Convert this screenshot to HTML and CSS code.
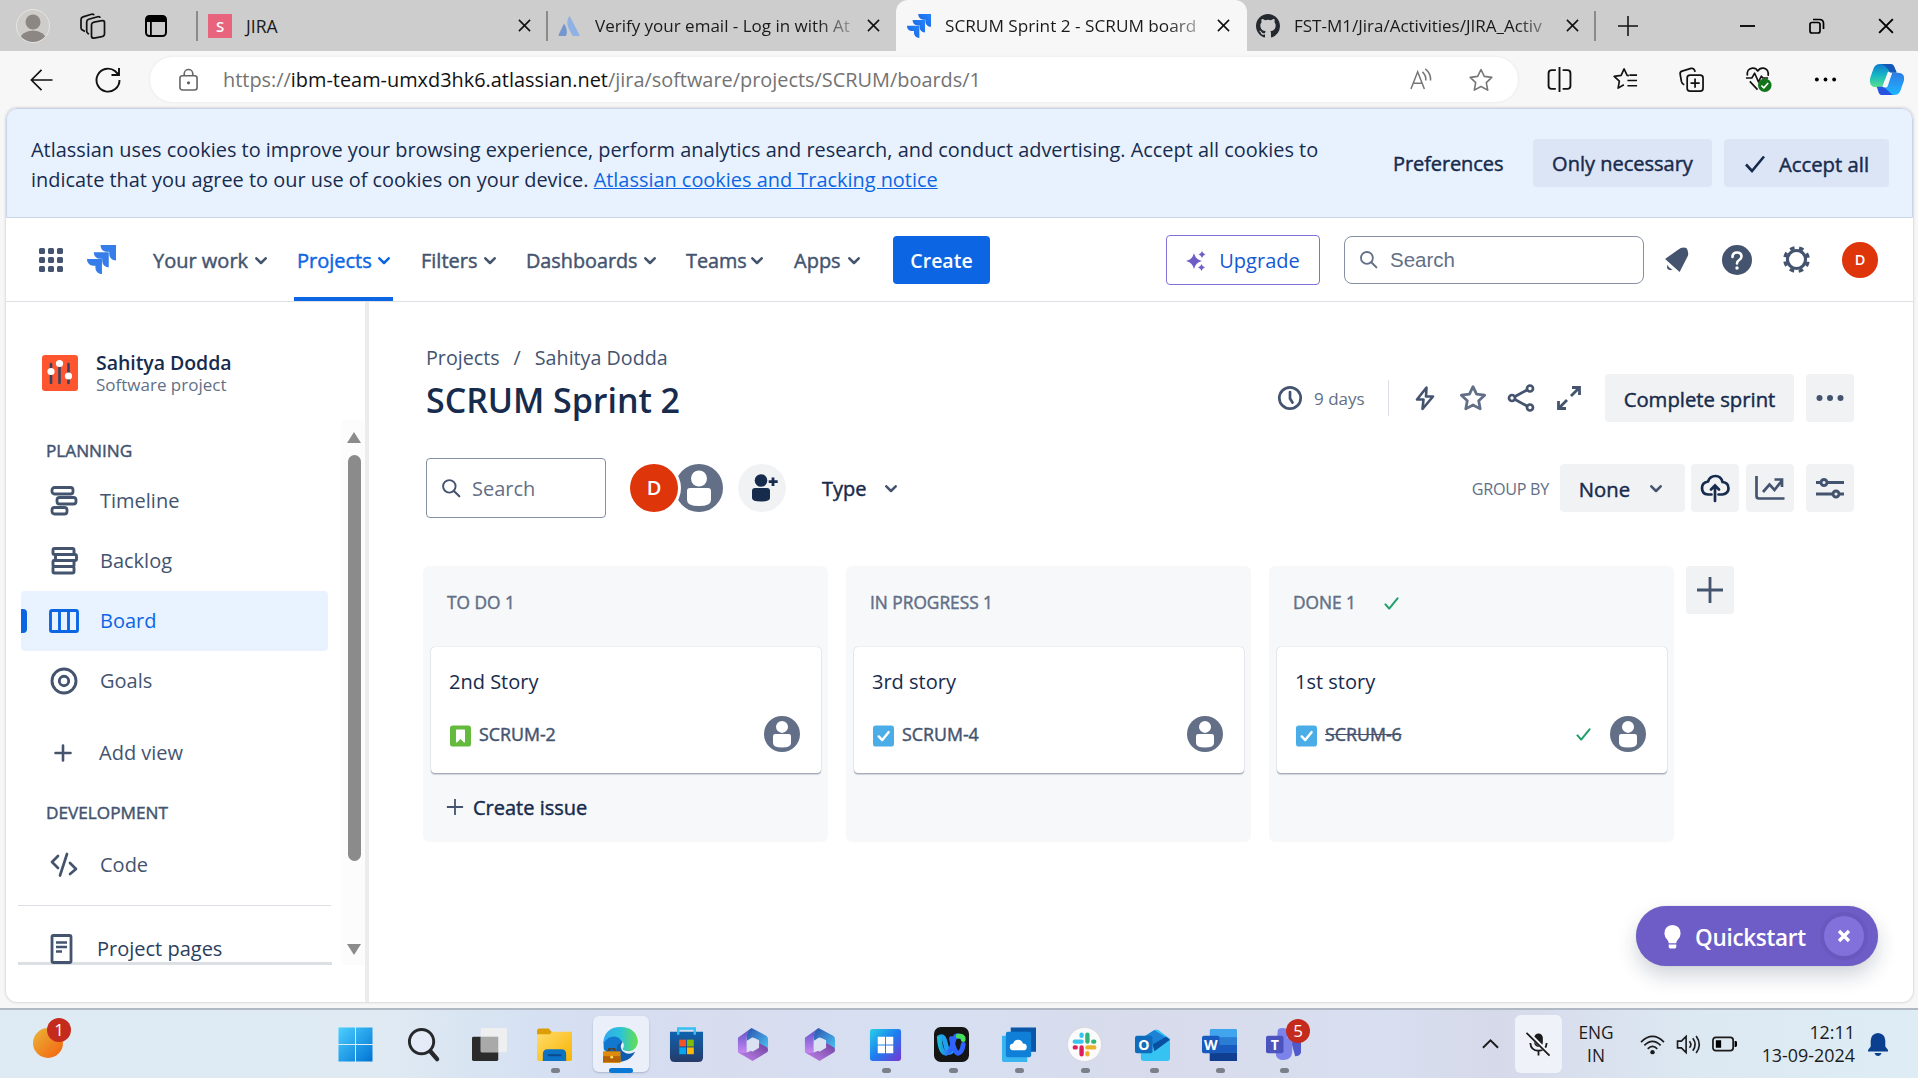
FILE: index.html
```html
<!DOCTYPE html>
<html lang="en">
<head>
<meta charset="utf-8">
<title>SCRUM Sprint 2 - SCRUM board</title>
<link rel="stylesheet" href="styles.css">
</head>
<body>
<svg class="sprite" width="0" height="0">
  <defs>
    <linearGradient id="gJira" x1="1" y1="0" x2="0" y2="1"><stop offset="0" stop-color="#2684ff"/><stop offset="1" stop-color="#1663d8"/></linearGradient>
    <linearGradient id="gWin" x1="0" y1="0" x2="1" y2="1"><stop offset="0" stop-color="#4cd0ff"/><stop offset="1" stop-color="#0073d4"/></linearGradient>
    <linearGradient id="gFold" x1="0" y1="0" x2="1" y2="1"><stop offset="0" stop-color="#ffdc6b"/><stop offset="1" stop-color="#f8b300"/></linearGradient>
    <linearGradient id="gEdge" x1="0" y1="0" x2="1" y2="0"><stop offset="0" stop-color="#35a6f0"/><stop offset=".5" stop-color="#2cc3d8"/><stop offset="1" stop-color="#66e04c"/></linearGradient>
    <linearGradient id="gStore" x1="0" y1="0" x2="0" y2="1"><stop offset="0" stop-color="#0f62b0"/><stop offset="1" stop-color="#253b68"/></linearGradient>
    <linearGradient id="gHexA" x1="0" y1="0" x2="0" y2="1"><stop offset="0" stop-color="#5b50c8"/><stop offset="1" stop-color="#d08cf4"/></linearGradient>
    <linearGradient id="gHexB" x1="0" y1="0" x2="1" y2="1"><stop offset="0" stop-color="#2c4fae"/><stop offset="1" stop-color="#4cc4f4"/></linearGradient>
    <linearGradient id="gHexC" x1="0" y1="1" x2="1" y2="0"><stop offset="0" stop-color="#c487ee"/><stop offset="1" stop-color="#6c3f9c"/></linearGradient>
    <linearGradient id="gTile" x1="0" y1="0" x2="1" y2="1"><stop offset="0" stop-color="#28d0e6"/><stop offset=".5" stop-color="#1d7cf0"/><stop offset="1" stop-color="#7a35d0"/></linearGradient>
    <linearGradient id="gWebex" x1="0" y1="0" x2="1" y2="0"><stop offset="0" stop-color="#19b9d8"/><stop offset=".5" stop-color="#2f63ff"/><stop offset="1" stop-color="#2f63ff"/></linearGradient>
    <linearGradient id="gCopA" x1="0" y1="0" x2="0" y2="1"><stop offset="0" stop-color="#0f7bd0"/><stop offset=".5" stop-color="#16b8c4"/><stop offset="1" stop-color="#5be08c"/></linearGradient>
    <linearGradient id="gCopB" x1="0" y1="0" x2="0" y2="1"><stop offset="0" stop-color="#2c7be6"/><stop offset="1" stop-color="#1fb6ff"/></linearGradient>
    <symbol id="close" viewBox="0 0 14 14"><path d="M1 1l12 12M13 1L1 13" stroke="currentColor" stroke-width="1.7" fill="none"/></symbol>
    <symbol id="chev" viewBox="0 0 12 8"><path d="M1.3 1.3L6 6l4.700-4.700" stroke="currentColor" stroke-width="2.500" fill="none" stroke-linecap="round" stroke-linejoin="round"/></symbol>
    <symbol id="jira" viewBox="0 0 32 32"><path d="M15 0h17v17c-4 0-7.500-3-7.500-7.500V7.500H22c-4 0-7-3-7-7.500z"/><path d="M7.500 8h16.500v16.500c-4 0-7.200-3-7.200-7.200v-2H14.500c-4 0-7-3-7-7.300z"/><path d="M0 15.500h16.500V32c-4 0-7.200-3-7.200-7.200v-2H7c-4 0-7-3-7-7.300z"/></symbol>
    <symbol id="search" viewBox="0 0 24 24"><circle cx="10" cy="10" r="7.500" fill="none" stroke="currentColor" stroke-width="2.300"/><path d="M15.500 15.500L22 22" stroke="currentColor" stroke-width="2.500" stroke-linecap="round"/></symbol>
    <symbol id="user" viewBox="0 0 48 48"><circle cx="24" cy="24" r="24" fill="#626f86"/><ellipse cx="24" cy="14.500" rx="8" ry="8"/><path d="M12 27q0-3 3-3h18q3 0 3 3v9q0 6-12 6t-12-6z"/></symbol>
    <symbol id="tick" viewBox="0 0 16 14"><path d="M1.500 8l4 4.500L14.500 1.500" fill="none" stroke="currentColor" stroke-width="2.200" stroke-linecap="round" stroke-linejoin="round"/></symbol>
    <symbol id="task" viewBox="0 0 22 22"><rect width="22" height="22" rx="3" fill="#4bade8"/><path d="M6 11.500l3.700 3.700L16.300 7" fill="none" stroke="#fff" stroke-width="2.600" stroke-linecap="round" stroke-linejoin="round"/></symbol>
    <symbol id="star" viewBox="0 0 26 26"><path d="M13 2.500l3.300 6.900 7.500 1-5.500 5.200 1.400 7.500L13 19.500l-6.700 3.600 1.400-7.500L2.200 10.400l7.500-1z" fill="none" stroke="currentColor" stroke-linejoin="round"/></symbol>
    <symbol id="hex" viewBox="0 0 36 36"><path d="M3 11L17 1c-5 4-5 8-5 14v11L8 29 3 26z" fill="url(#gHexA)"/><path d="M17 1l15 8q2 1 2 4v10L24 16q-1-5-6-4t-5 7L12 11Q12 4 17 1z" fill="url(#gHexB)"/><path d="M3 26q8 2 15-2 6-1 6-8l9 5q2 3 0 5L18 35z" fill="url(#gHexC)"/><path d="M18 11.500l6 2.500v7l-6 3.500-5-3v-7z" fill="#dae2f2" stroke="#dae2f2" stroke-width="1.500" stroke-linejoin="round"/></symbol>
  </defs>
</svg>

<header class="tabs">
  <svg class="t-avatar" viewBox="0 0 34 34"><defs><clipPath id="av"><circle cx="17" cy="17" r="16"/></clipPath></defs><circle cx="17" cy="17" r="16.500" fill="#cfcdca" stroke="#e6e5e3"/><g clip-path="url(#av)" fill="#8c8783"><circle cx="17" cy="13" r="7.500"/><ellipse cx="17" cy="31" rx="13" ry="9.500"/></g></svg>
  <svg class="t-work" viewBox="0 0 26 26" fill="none" stroke="#111" stroke-width="1.700" stroke-linejoin="round"><rect x="11.500" y="7.500" width="13" height="16" rx="2.500" transform="skewY(-10) translate(0 4)"/><path d="M9 21l-1-.6q-1.300-.8-1.300-2.400V9q0-2 2-2.700l9-2.600q2-.5 2.600 1M5 18.600l-3-1.800Q1 16 1 14.500V6.600q0-2 2-2.700l8.500-2.600q2-.5 2.600 1"/></svg>
  <svg class="t-vert" viewBox="0 0 22 22"><rect x="1" y="1" width="20" height="20" rx="3.500" fill="none" stroke="#000" stroke-width="2"/><path d="M1 7V4q0-3 3-3h14q3 0 3 3v3zM5 6h1.800v15H5z"/></svg>
  <i class="sep s1"></i>
  <div class="tab t1"><span class="fav-s">S</span><span class="label">JIRA</span><svg class="x"><use href="#close"/></svg></div>
  <i class="sep"></i>
  <div class="tab t2"><svg class="fav" viewBox="0 0 24 24" fill="#8fb1e4"><path d="M7 9.500L1.500 21q-.3 1 .8 1H9q2.500-6-2-12.500z" fill="#7597cf"/><path d="M12 2.500Q8.500 9 12 15l3.200 6.300q.3.700 1 .7H22q1 0 .5-1L13 2.500q-.5-.6-1 0z"/></svg><span class="label fade">Verify your email - Log in with At</span><svg class="x"><use href="#close"/></svg></div>
  <div class="tab t3"><svg class="fav" fill="url(#gJira)"><use href="#jira"/></svg><span class="label fade">SCRUM Sprint 2 - SCRUM board</span><svg class="x"><use href="#close"/></svg></div>
  <div class="tab t4"><svg class="fav" viewBox="0 0 16 16" fill="#24292f"><path d="M8 0C3.580 0 0 3.580 0 8c0 3.540 2.290 6.530 5.470 7.590.4.070.55-.17.55-.38 0-.19-.01-.82-.01-1.490-2.010.37-2.530-.49-2.690-.94-.09-.23-.48-.94-.82-1.130-.28-.15-.68-.52-.01-.53.63-.01 1.080.58 1.230.82.72 1.210 1.870.87 2.330.66.07-.52.28-.87.51-1.070-1.780-.2-3.640-.89-3.640-3.950 0-.87.31-1.590.82-2.150-.08-.2-.36-1.020.08-2.120 0 0 .67-.21 2.200.82a7.600 7.600 0 0 1 4 0c1.530-1.040 2.200-.82 2.200-.82.44 1.100.16 1.920.08 2.120.51.56.82 1.270.82 2.150 0 3.070-1.870 3.750-3.650 3.950.29.25.54.73.54 1.480 0 1.070-.01 1.930-.01 2.200 0 .21.15.46.55.38A8.010 8.010 0 0 0 16 8c0-4.420-3.580-8-8-8z"/></svg><span class="label fade">FST-M1/Jira/Activities/JIRA_Activ</span><svg class="x"><use href="#close"/></svg></div>
  <i class="sep"></i>
  <svg class="t-plus" viewBox="0 0 22 22"><path d="M11 0v22M0 11h22" stroke="#111" stroke-width="1.700"/></svg>
  <svg class="t-win" viewBox="0 0 16 16"><path d="M0 8h15" stroke="#000" stroke-width="1.800"/></svg>
  <svg class="t-win" viewBox="0 0 16 16" fill="none" stroke="#000" stroke-width="1.700"><rect x="1" y="4.500" width="10" height="10.500" rx="2"/><path d="M4 1.500h6.500q4 0 4 4V11"/></svg>
  <svg class="t-win"><use href="#close"/></svg>
</header>

<div class="toolbar">
  <svg class="b-back" viewBox="0 0 26 24" fill="none" stroke="#111" stroke-width="1.800"><path d="M25 12H2M13 1L2 12l11 11"/></svg>
  <svg class="b-ref" viewBox="0 0 26 26" fill="none" stroke="#111" stroke-width="1.900"><path d="M24.500 13A11.500 11.500 0 1 1 20 4l3.500 3.500M24 1v7h-7.500"/></svg>
  <div class="address">
    <svg class="a-lock" viewBox="0 0 20 24" fill="none" stroke="#666" stroke-width="1.700"><rect x="1" y="7.500" width="18" height="15" rx="2.500"/><path d="M5.500 7.500V5.500a4.500 4.500 0 0 1 9 0v2"/><circle cx="10" cy="15" r=".9" fill="#666"/></svg>
    <span class="url">https://<b>ibm-team-umxd3hk6.atlassian.net</b>/jira/software/projects/SCRUM/boards/1</span>
    <svg class="a-read" viewBox="0 0 24 24" fill="none" stroke="#777" stroke-width="1.600"><path d="M1 22L8 4l7 18M3.500 16h9M13 4q4 4 3.500 9M16 1q6 5 5.500 12"/></svg>
    <svg class="a-star" stroke-width="1.600"><use href="#star"/></svg>
  </div>
  <div class="tools">
    <svg viewBox="0 0 24 24" fill="none" stroke="#111" stroke-width="1.800"><path d="M8.500 3H4.500Q1.500 3 1.500 6v12q0 3 3 3h4M15 3h4.500q3 0 3 3v12q0 3-3 3H15M12 0v24"/></svg>
    <svg viewBox="0 0 26 26" fill="none" stroke="#111" stroke-width="1.700" stroke-linejoin="round"><path d="M16.500 9l-1.800-.3L11.500 2 8.500 8.700l-7.300 1 5.400 5L5.300 22l6-3.500M17 8.500h8M15 14h10M15 19.500h10"/></svg>
    <svg viewBox="0 0 26 26" fill="none" stroke="#111" stroke-width="1.800"><path d="M5.500 18.500Q3 17.500 2.500 15L1.200 7.500q-.4-2.500 2-3.200L12.500 1.500q2.500-.6 3.500 1.500l.8 2"/><rect x="8.500" y="8.500" width="16.500" height="16.500" rx="3"/><path d="M16.700 12v9.500M12 16.700h9.500"/></svg>
    <svg class="heart" viewBox="0 0 28 28" fill="none" stroke="#111" stroke-width="1.700" stroke-linejoin="round"><path d="M2.500 10Q1.500 3 7.500 2.200q4-.4 5.700 3 2-3.400 6-3 5.700 1 4.800 8M13 24.500L5 16M1 12.500h6l3-5 4 9 3-6 1.500 2H24"/><circle cx="20.500" cy="20" r="7" fill="#13741a" stroke="none"/><path d="M17 20.200l2.500 2.500 4.500-5" stroke="#fff"/></svg>
    <svg viewBox="0 0 26 26"><circle cx="4" cy="13" r="2"/><circle cx="13" cy="13" r="2"/><circle cx="22" cy="13" r="2"/></svg>
    <svg class="copilot" viewBox="0 0 36 34"><path d="M22 1l6 8h-9l-6 16H7q-8 0-6.500-9L4 6q1.500-5 7-5z" fill="url(#gCopA)"/><path d="M14 33l-6-8h9l6-15h6q8 0 6.500 8L32 28q-1.500 5-7 5z" fill="url(#gCopB)"/><path d="M12 1h10q3 0 4 4l2 5h-7q-3-7-9-9z" fill="#1559b8"/><path d="M24 33H13q-3 0-4-4l-1.500-4.500h7z" fill="#2453e0"/><path d="M19.500 10.500h3.200l-4.700 14h-4z" fill="#f7f7f7" stroke="#f7f7f7" stroke-linejoin="round"/></svg>
  </div>
</div>

<div class="viewport">
  <section class="cookies">
    <p>Atlassian uses cookies to improve your browsing experience, perform analytics and research, and conduct advertising. Accept all cookies to<br>indicate that you agree to our use of cookies on your device. <a>Atlassian cookies and Tracking notice</a></p>
    <span class="pref">Preferences</span>
    <button class="only">Only necessary</button>
    <button class="accept"><svg viewBox="0 0 22 18"><path d="M2 9.500l6 6.500L20 1.500" fill="none" stroke="#172b4d" stroke-width="2.600"/></svg>Accept all</button>
  </section>

  <nav class="nav">
    <svg class="n-grid" viewBox="0 0 24 24" fill="#44546f"><rect width="6" height="6" rx="1.500"/><rect x="9" width="6" height="6" rx="1.500"/><rect x="18" width="6" height="6" rx="1.500"/><rect y="9" width="6" height="6" rx="1.500"/><rect x="9" y="9" width="6" height="6" rx="1.500"/><rect x="18" y="9" width="6" height="6" rx="1.500"/><rect y="18" width="6" height="6" rx="1.500"/><rect x="9" y="18" width="6" height="6" rx="1.500"/><rect x="18" y="18" width="6" height="6" rx="1.500"/></svg>
    <svg class="n-jira" fill="#357de8"><use href="#jira"/></svg>
    <a class="m-work">Your work<svg><use href="#chev"/></svg></a>
    <a class="m-proj on">Projects<svg><use href="#chev"/></svg></a>
    <a class="m-filt">Filters<svg><use href="#chev"/></svg></a>
    <a class="m-dash">Dashboards<svg><use href="#chev"/></svg></a>
    <a class="m-team">Teams<svg><use href="#chev"/></svg></a>
    <a class="m-apps">Apps<svg><use href="#chev"/></svg></a>
    <button class="create">Create</button>
    <button class="upgrade"><svg viewBox="0 0 20 20" fill="#6e5dc6"><path d="M8 2q1.500 6.500 8 8-6.500 1.500-8 8-1.500-6.500-8-8 6.500-1.500 8-8z"/><path d="M16 0q.7 2.800 3.500 3.500Q16.700 4.200 16 7q-.7-2.800-3.500-3.500Q15.300 2.800 16 0zM15.500 13q.7 2.800 3.500 3.500-2.800.7-3.500 3.500-.7-2.800-3.500-3.500 2.800-.7 3.500-3.500z"/></svg>Upgrade</button>
    <div class="n-search"><svg><use href="#search"/></svg>Search</div>
    <div class="n-icons">
      <svg viewBox="0 0 26 26" fill="#44546f"><path d="M2 12.500L14.500 3.500q4-3 8-1.500 2.500 3 1.500 7.500L16 25z"/><path d="M4.500 18q1 3.500 5 4.500-3 1.500-4.700 0t-.3-4.500z"/></svg>
      <svg class="help" viewBox="0 0 30 30"><circle cx="15" cy="15" r="15" fill="#44546f"/><path d="M10.500 12q0-4.500 4.500-4.500t4.500 4q0 2-2.300 3.500T15 18.500" fill="none" stroke="#fff" stroke-width="2.600" stroke-linecap="round"/><circle cx="15" cy="23" r="1.700" fill="#fff"/></svg>
      <svg viewBox="0 0 26 26" fill="none" stroke="#44546f"><circle cx="13" cy="13" r="8.700" stroke-width="3"/><circle cx="13" cy="13" r="11.300" stroke-width="3.200" stroke-dasharray="4.400 4.475" stroke-dashoffset="-2.200"/></svg>
      <span class="me">D</span>
    </div>
  </nav>

  <div class="body">
    <aside class="side">
      <div class="project">
        <svg viewBox="0 0 36 36"><rect width="36" height="36" rx="3" fill="#ff5630"/><path d="M9 9v19M17.500 8v20M26.500 9v19" stroke="#344563" stroke-width="2.600" stroke-linecap="round"/><g fill="#fff"><circle cx="9" cy="16.500" r="3.600"/><circle cx="17.500" cy="8.500" r="3.600"/><circle cx="26.500" cy="21" r="3.600"/></g></svg>
        <div><strong>Sahitya Dodda</strong><small>Software project</small></div>
      </div>
      <div class="scroller">
        <div class="menu">
          <h3>PLANNING</h3>
          <a><svg viewBox="0 0 30 30" fill="none" stroke="#44546f" stroke-width="2.800"><rect x="3" y="1.500" width="21" height="6.500" rx="2.500"/><rect x="8" y="11.500" width="19" height="6.500" rx="2.500"/><rect x="3" y="21.500" width="15" height="6.500" rx="2.500"/></svg>Timeline</a>
          <a><svg viewBox="0 0 30 30" fill="none" stroke="#44546f" stroke-width="2.900"><rect x="4" y="2.500" width="21" height="6" rx="1.500"/><rect x="6.500" y="8.500" width="21" height="6" rx="1.500"/><rect x="4" y="14.500" width="21" height="6" rx="1"/><rect x="4" y="20.500" width="21" height="6.500" rx="1.500"/></svg>Backlog</a>
          <a class="on"><svg viewBox="0 0 30 30" fill="none" stroke="#0c66e4" stroke-width="2.900"><rect x="1.500" y="4.500" width="27" height="21" rx="1.500"/><path d="M10.500 4.500v21M19.500 4.500v21"/></svg>Board</a>
          <a><svg viewBox="0 0 30 30" fill="none" stroke="#44546f" stroke-width="2.900"><circle cx="15" cy="15" r="12"/><circle cx="15" cy="15" r="4.700"/></svg>Goals</a>
          <a class="add"><svg viewBox="0 0 30 30"><path d="M14 7.500v15M6.500 15h15" stroke="#44546f" stroke-width="2.600" stroke-linecap="round"/></svg>Add view</a>
          <h3 class="dev">DEVELOPMENT</h3>
          <a class="code"><svg viewBox="0 0 30 30" fill="none" stroke="#44546f" stroke-width="2.700" stroke-linecap="round" stroke-linejoin="round"><path d="M9 6l-6 6 6 6M18 4l-7 21.500M21 13l6 6-6 5"/></svg>Code</a>
          <hr>
          <a class="pages"><svg viewBox="0 0 24 30" fill="none" stroke="#44546f"><rect x="3" y="1.500" width="19" height="27" rx="1.500" stroke-width="2.800"/><path d="M7 8.500h11M7 13h11M7 17.500h6" stroke-width="2.500"/></svg>Project pages</a>
        </div>
        <div class="bar"><i class="up"></i><i class="thumb"></i><i class="down"></i></div>
      </div>
    </aside>

    <main class="main">
      <div class="crumbs"><span>Projects</span><span>/</span><span>Sahitya Dodda</span></div>
      <div class="head">
        <h1>SCRUM Sprint 2</h1>
        <div class="actions">
          <svg class="i26" viewBox="0 0 26 26" fill="none" stroke="#44546f" stroke-width="2.700" stroke-linecap="round"><circle cx="13" cy="13" r="10.700"/><path d="M13 7v6.500l2.500 4"/></svg>
          <span class="days">9 days</span>
          <i class="vr"></i>
          <svg class="i26" viewBox="0 0 26 26" fill="none" stroke="#44546f" stroke-width="2.600" stroke-linejoin="round"><path d="M14.500 2.500L5 14.500h6.500L10.500 24 21 11.500h-7z"/></svg>
          <svg class="i28 a-fav" stroke-width="2.600"><use href="#star"/></svg>
          <svg class="i28" viewBox="0 0 28 28" fill="none" stroke="#44546f" stroke-width="2.700"><circle cx="5" cy="14" r="3"/><circle cx="23" cy="4.500" r="3"/><circle cx="23" cy="23.500" r="3"/><path d="M8 12.500l12-6.500M8 15.500l12 6.500"/></svg>
          <svg class="i26" viewBox="0 0 26 26" fill="none" stroke="#44546f" stroke-width="2.800"><path d="M16 2.500h7.500V10M23 3l-8 8M2.500 16v7.500H10M3 23l8-8"/></svg>
          <button class="done-btn">Complete sprint</button>
          <button class="sq"><svg viewBox="0 0 28 28" fill="#44546f"><circle cx="3.500" cy="14" r="3"/><circle cx="14" cy="14" r="3"/><circle cx="24.500" cy="14" r="3"/></svg></button>
        </div>
      </div>
      <div class="filters">
        <div class="f-search"><svg><use href="#search"/></svg><span>Search</span></div>
        <span class="av-d">D</span>
        <svg class="av-u" fill="#fff"><use href="#user"/></svg>
        <span class="av-add"><svg viewBox="0 0 28 28" fill="#172b4d"><circle cx="11" cy="6.500" r="6.300"/><path d="M2 17q0-3 3-3h12q3 0 3 3v7q0 3.500-9 3.500T2 24z"/><path d="M23 3.500v8.500M18.700 7.700h9" stroke="#172b4d" stroke-width="2.800"/></svg></span>
        <span class="type">Type<svg><use href="#chev"/></svg></span>
        <span class="group">GROUP BY</span>
        <button class="none">None<svg><use href="#chev"/></svg></button>
        <button class="sq q1"><svg class="big" viewBox="0 0 30 30" fill="none" stroke="#172b4d" stroke-width="2.700" stroke-linecap="round"><path d="M11.500 21.500H8q-6-.5-6-6.500 0-5.500 6-6.500Q10 3 15.500 3t7 6q6 .5 6 6.500 0 5-6 6h-4M15 28V13M11 16.500l4-4 4 4"/></svg></button>
        <button class="sq q2"><svg class="big" viewBox="0 0 30 30" fill="none" stroke="#44546f" stroke-width="2.700"><path d="M1.500 3v20q0 2.500 2.500 2.500h25.500M8 19l6.500-7.500 5 5.500L27 7.500M19.500 6.500H27V14"/></svg></button>
        <button class="sq q3"><svg viewBox="0 0 28 28" fill="none" stroke="#44546f" stroke-width="2.900"><path d="M0 8.500h5M11 8.500h17M0 20h17M23 20h5"/><circle cx="8" cy="8.500" r="3"/><circle cx="20" cy="20" r="3"/></svg></button>
      </div>

      <div class="board">
        <section class="col">
          <h2>TO DO 1</h2>
          <article class="card"><p>2nd Story</p><div class="row"><svg class="kind" viewBox="0 0 22 22"><rect width="22" height="22" rx="3" fill="#63ba3c"/><path d="M7 5h8v12l-4-4-4 4z" fill="#fff" stroke="#fff" stroke-width="1.500" stroke-linejoin="round"/></svg><span class="key">SCRUM-2</span><svg class="who" fill="#fff"><use href="#user"/></svg></div></article>
          <div class="new"><svg viewBox="0 0 20 20"><path d="M10 1v18M1 10h18" stroke="#44546f" stroke-width="2"/></svg>Create issue</div>
        </section>
        <section class="col">
          <h2>IN PROGRESS 1</h2>
          <article class="card"><p>3rd story</p><div class="row"><svg class="kind"><use href="#task"/></svg><span class="key">SCRUM-4</span><svg class="who" fill="#fff"><use href="#user"/></svg></div></article>
        </section>
        <section class="col">
          <h2>DONE 1<svg class="tick"><use href="#tick"/></svg></h2>
          <article class="card"><p>1st story</p><div class="row"><svg class="kind"><use href="#task"/></svg><span class="key struck">SCRUM-6</span><svg class="tick"><use href="#tick"/></svg><svg class="who" fill="#fff"><use href="#user"/></svg></div></article>
        </section>
        <button class="sq addcol"><svg viewBox="0 0 28 28"><path d="M14 1v26M1 14h26" stroke="#44546f" stroke-width="2.800"/></svg></button>
      </div>
    </main>
  </div>
  <div class="quick"><svg viewBox="0 0 20 26" fill="#fff"><path d="M10 1q8.500.5 8.500 9 0 3-3 6.500-1.500 2-1.500 3.500H6q0-1.500-1.500-3.500-3-3.500-3-6.500Q1.500 1.500 10 1zM6 21.500h8V24q0 1.500-1.500 1.500h-5Q6 25.500 6 24z"/></svg><em>Quickstart</em><span><svg viewBox="0 0 14 14"><path d="M2 2l10 10M12 2L2 12" stroke="#fff" stroke-width="3.400"/></svg></span></div>
</div>

<footer class="taskbar">
  <div class="weather"><i></i><b>1</b></div>
  <div class="apps">
    <span><svg viewBox="0 0 36 36" fill="url(#gWin)"><path d="M.5.500h17v17H.5zM18.500.500h17v17h-17zM.5 18.500h17v17H.5zM18.500 18.500h17v17h-17z"/></svg></span>
    <span class="nudge"><svg viewBox="0 0 36 36" fill="none" stroke="#26282b"><circle cx="16" cy="15" r="12.500" stroke-width="3" fill="#e9eefa" fill-opacity=".6"/><path d="M25 25l7 8" stroke-width="4.500" stroke-linecap="round"/></svg></span>
    <span class="nudge"><svg viewBox="0 0 36 36"><rect y="10" width="27" height="25" rx="1.500" fill="#2b2b2b"/><rect x="9" y="1" width="27" height="25" rx="1.500" fill="#f0f0f0" fill-opacity=".93"/><path d="M9 10h18v16H9z" fill="#a9a9a9"/></svg></span>
    <span class="run"><svg viewBox="0 0 36 36"><path d="M0 10V4q0-2.500 2.500-2.500H12L15 5h0v5z" fill="#dc9d07"/><path d="M0 7.500h13l3-2.500h20v28q0 2-2 2H2q-2 0-2-2z" fill="url(#gFold)"/><path d="M6 35v-7q0-5 5-5h14q5 0 5 5v7z" fill="#0c72c4"/><path d="M11 29h14" stroke="#0b4b8c" stroke-width="2"/></svg></span>
    <span class="active"><svg viewBox="0 0 36 36"><path d="M2 22a16 16 0 0 0 18 13.500q9-1.500 13-10-7 4-12 0t-1-10q-8-6-14-2z" fill="#0f5cae"/><path d="M0 18Q1 0 18 0q16 0 18 15-1 9-9 10-5 0-7-2 3-4 0-8Q9 4 0 18z" fill="url(#gEdge)"/><path d="M1 16Q7 7 16 11q4 3 4 5-6 0-6 8H1q-1-4 0-8z" fill="#1278ce"/><path d="M0 25h18v12H0z" fill="#e08a0a"/><path d="M0 30h18v6H0z" fill="#b46206"/><path d="M6 24.500v-2h6v2" fill="none" stroke="#5d3305" stroke-width="1.500"/><circle cx="9" cy="31" r="1.500" fill="#ffd76a"/></svg></span>
    <span><svg viewBox="0 0 36 36"><path d="M1 5h34v26q0 5-5 5H6q-5 0-5-5z" fill="url(#gStore)"/><path d="M9.500 8V1.500h17V8" fill="none" stroke="#35bff2" stroke-width="2.500"/><path d="M10.500 13h7v7h-7z" fill="#f35325"/><path d="M18.500 13h7v7h-7z" fill="#81bc06"/><path d="M10.500 21h7v7h-7z" fill="#05a6f0"/><path d="M18.500 21h7v7h-7z" fill="#ffba08"/></svg></span>
    <span><svg><use href="#hex"/></svg></span>
    <span><svg><use href="#hex"/></svg></span>
    <span class="run"><svg viewBox="0 0 36 36"><rect x="2" y="2" width="32" height="33" rx="2.500" fill="url(#gTile)"/><path d="M10 10h7.500v8H10zM18.500 10H26v8h-7.500zM10 19h7.500v8H10zM18.500 19H26v8h-7.500z" fill="#fff"/></svg></span>
    <span class="run"><svg viewBox="0 0 36 36"><rect width="36" height="36" rx="7" fill="#151515"/><g fill="none" stroke-width="5" stroke-linecap="round"><path d="M5.500 11Q9 8 11 14l2 8q2 6 5 3" stroke="#1f9ff0"/><path d="M5.500 11q1 16 7 16 5-1 7-11t8-6" stroke="url(#gWebex)"/><path d="M18 12q3 15 7 15 4-1 5-9" stroke="#2f63ff"/><path d="M25 9.500q5-1 5 3.500" stroke="#45e05a"/></g></svg></span>
    <span class="run"><svg viewBox="0 0 36 36"><path d="M10 .5h26v25H10z" fill="#0a57aa"/><path d="M1 9h26v27H3q-2 0-2-2z" fill="#38b5ee"/><rect x="5" y="5" width="26" height="26" rx="2" fill="#0f7fd8"/><path d="M12 24q-3-.5-3-3.500t3.500-3.500q1-4 5-4t5 4q4 0 4 3.500t-3.500 3.500z" fill="#fff"/></svg></span>
    <span class="run"><svg viewBox="0 0 36 36"><circle cx="18" cy="18" r="17.500" fill="#fbfbfb" stroke="#d6d6de"/><g fill="none" stroke-width="4.500" stroke-linecap="round"><path d="M8 15h7M15 8v1" stroke="#36c5f0"/><path d="M21 8v7M27 15h1" stroke="#2eb67d"/><path d="M28 21h-7M21 27v1" stroke="#ecb22e"/><path d="M15 28v-7M8 21h1" stroke="#e01e5a"/></g></svg></span>
    <span class="run nudge"><svg viewBox="0 0 36 36"><path d="M6 12L20 3q2-1 4 0l12 9v20q0 3-3 3H9q-3 0-3-3z" fill="#36c3f2"/><path d="M6 12L20 3l14 9-10 8z" fill="#1b82d6"/><path d="M18 18l14-8 4 3-16 12z" fill="#0b4fa2"/><rect y="9" width="18" height="18" rx="2" fill="#0f6cbd"/><text x="9" y="23.500" text-anchor="middle" class="app-letter">O</text></svg></span>
    <span class="run nudge"><svg viewBox="0 0 36 36"><rect x="8" y="2" width="28" height="33" rx="1.500" fill="#41a5ee"/><path d="M8 10.500h28v8H8z" fill="#2b7cd3"/><path d="M8 18.500h28v8H8z" fill="#185abd"/><path d="M8 26.500h28V35H8z" fill="#103f91"/><rect y="9" width="18" height="18" rx="2" fill="#185abd"/><text x="9" y="23.500" text-anchor="middle" class="app-letter">W</text></svg></span>
    <span class="run teams"><svg viewBox="0 0 36 36"><path d="M25 12h11v14q-1 4-6 4z" fill="#5059c9"/><path d="M12 4q0-3 5-3t5 3v7h5v15q-1 8-9 8t-8-7z" fill="#7b83eb"/><rect y="9" width="18" height="18" rx="2" fill="#4b53bc"/><text x="9" y="23.500" text-anchor="middle" class="app-letter">T</text></svg><b>5</b></span>
  </div>
  <div class="tray">
    <svg class="y-up" viewBox="0 0 18 10"><path d="M1 9l8-8 8 8" fill="none" stroke="#1b1b1b" stroke-width="2"/></svg>
    <span class="mic"><svg viewBox="0 0 26 26" fill="none" stroke="#1b1b1b" stroke-width="1.900"><rect x="8.500" y="2" width="9" height="14" rx="4.500" fill="#1b1b1b" stroke="none"/><path d="M4.500 12q.5 8 8.500 8t8.500-8M13 20v5"/><path d="M1.500 1l24 24" stroke="#f2f5fa" stroke-width="4"/><path d="M.5 1.500l24 23.500"/></svg></span>
    <span class="lang">ENG<br>IN</span>
    <svg class="y-wifi" viewBox="0 0 26 22" fill="none" stroke="#1b1b1b" stroke-width="1.800"><path d="M1 8.500q12-12 24 0M4.500 12q8.500-8.500 17 0M8 15.500q5-5 10 0"/><circle cx="13" cy="19" r="2.300" fill="#1b1b1b" stroke="none"/></svg>
    <svg class="y-vol" viewBox="0 0 26 22" fill="none" stroke="#1b1b1b" stroke-width="1.700"><path d="M1.500 7.500h4l5-5v17l-5-5h-4zM14 7.500q3 3.500 0 7M17.500 4.500q5 6.500 0 13M21 2q6.500 9 0 18"/></svg>
    <svg class="y-bat" viewBox="0 0 26 16"><rect x="1" y="1" width="21" height="14" rx="3" fill="none" stroke="#1b1b1b" stroke-width="1.800"/><path d="M4 4h5.500v8H4zM23.500 5h1q1.500 0 1.500 1.500v3q0 1.500-1.500 1.500h-1z"/></svg>
    <span class="clock">12:11<br>13-09-2024</span>
    <svg class="y-bell" viewBox="0 0 20 24" fill="#0b3f8f"><path d="M10 1q7 .5 7.300 7.500v6L20 18v1.500H0V18l2.700-3.500v-6Q3 1.500 10 1zM6.500 21h7q-1 3-3.500 3t-3.500-3z"/></svg>
  </div>
</footer>
</body>
</html>
```
FILE: styles.css
```css
* { box-sizing: border-box; }
body {
  margin: 0;
  width: 1918px;
  height: 1078px;
  overflow: hidden;
  display: flex;
  flex-direction: column;
  background: #f7f7f7;
  color: #172b4d;
  font: 20px/30px "Open Sans", "Noto Sans", sans-serif;
}
svg { display: block; flex: none; overflow: visible; }
i { display: block; font-style: normal; flex: none; }
button {
  border: 0;
  padding: 2px 0 0;
  margin: 0;
  font: inherit;
  color: #172b4d;
  display: flex;
  align-items: center;
  flex: none;
  white-space: nowrap;
}
.sprite { position: absolute; }

/* Medium weight, between regular and semibold */
.pref, .only, .accept, .nav a, .menu h3, .done-btn, .type, .none, .col h2, .key, .new { -webkit-text-stroke: .45px currentColor; }

/* Browser tabs */
.tabs { height: 51px; flex: none; background: #cdcdcd; display: flex; align-items: center; font-size: 17px; color: #1a1a1a; }
.t-avatar { width: 34px; height: 34px; margin-left: 16px; }
.t-work { width: 26px; height: 26px; margin-left: 30px; }
.t-vert { width: 22px; height: 22px; margin-left: 39px; }
.sep { width: 2px; height: 30px; background: #8a8a8a; }
.s1 { margin-left: 29px; }
.tab { height: 51px; display: flex; align-items: center; flex: none; }
.t1 { width: 348px; padding-left: 10px; font-size: 17.600px; }
.t2 { width: 348px; padding-left: 9px; }
.t3 { width: 351px; padding-left: 11px; background: #f7f7f7; border-radius: 12px 12px 0 0; font-size: 17.200px; }
.t4 { width: 347px; padding-left: 9px; }
.fav, .fav-s { width: 24px; height: 24px; flex: none; }
.fav-s { background: #e8637c; color: #fff; font-weight: 600; font-size: 15px; line-height: 24px; text-align: center; }
.label { margin-left: 14px; width: 258px; white-space: nowrap; }
.fade { -webkit-mask-image: linear-gradient(to right, #000 86%, rgba(0, 0, 0, .25)); mask-image: linear-gradient(to right, #000 86%, rgba(0, 0, 0, .25)); }
.x { width: 13px; height: 13px; margin-left: 14px; color: #111; }
.t-plus { width: 20px; height: 20px; margin-left: 22px; }
.t-win { width: 16px; height: 16px; margin-left: 53px; color: #000; }
.t-plus + .t-win { margin-left: 102px; }

/* Browser toolbar */
.toolbar { height: 57px; flex: none; display: flex; align-items: center; }
.b-back { width: 25px; height: 22px; margin-left: 29px; }
.b-ref { width: 26px; height: 26px; margin-left: 41px; }
.address { width: 1368px; height: 45px; margin-left: 29px; border-radius: 23px; background: #fff; box-shadow: 0 0 3px #e4e4e4; display: flex; align-items: center; }
.a-lock { width: 19px; height: 24px; margin-left: 29px; }
.url { width: 1187px; margin-left: 25px; font-size: 19.900px; color: #737373; white-space: nowrap; }
.url b { font-weight: 400; color: #111; }
.a-read { width: 23px; height: 23px; }
.a-star { width: 26px; height: 26px; margin-left: 35px; color: #777; }
.tools { display: flex; align-items: center; margin-left: 29px; gap: 41px; }
.tools svg { width: 25px; height: 25px; }
.tools .heart { width: 27px; height: 27px; }
.tools .copilot { width: 36px; height: 33px; margin-left: -10px; }

/* Page frame */
.viewport { margin: 0 5px 0 6px; height: 894px; flex: none; background: #fff; border-radius: 11px; box-shadow: 0 0 3px #bbb; overflow: hidden; position: relative; }
.cookies { height: 110px; background: #e8f2ff; border: 1px solid #c8d4e8; border-radius: 11px 11px 0 0; padding-left: 24px; display: flex; align-items: center; }
.cookies p { margin: 0; padding-top: 3px; width: 1362px; white-space: nowrap; font-size: 19.920px; }
.cookies a { color: #0c66e4; text-decoration: underline; }
.pref { width: 140px; padding-top: 2px; letter-spacing: -.1px; }
.only, .accept { height: 48px; border-radius: 4px; background: #dce5f5; justify-content: center; }
.only { width: 179px; }
.accept { width: 165px; margin-left: 12px; gap: 13px; font-size: 20.300px; }
.accept svg { width: 22px; height: 18px; }

.nav { height: 84px; border-bottom: 1px solid #dcdfe4; display: flex; align-items: center; color: #44546f; }
.n-grid { width: 24px; height: 24px; margin-left: 33px; }
.n-jira { width: 29px; height: 29px; margin-left: 24px; }
.nav a { display: flex; align-items: center; justify-content: space-between; height: 83px; padding-top: 3px; flex: none; white-space: nowrap; }
.nav a svg { width: 12px; height: 8px; }
.m-work { width: 114px; margin-left: 37px; }
.nav .m-proj { width: 99px; margin-left: 27px; padding: 7px 3px 0; color: #0c66e4; border-bottom: 4px solid #0c66e4; }
.m-filt { width: 75px; margin-left: 28px; }
.m-dash { width: 130px; margin-left: 30px; font-size: 19.800px; }
.m-team { width: 77px; margin-left: 30px; font-size: 19.800px; }
.m-apps { width: 66px; margin-left: 31px; }
.create { width: 97px; height: 48px; margin-left: 33px; border-radius: 4px; background: #0c66e4; color: #fff; justify-content: center; font-weight: 600; font-size: 19.500px; }
.upgrade { width: 154px; height: 50px; margin-left: 176px; border: 1px solid #8270db; border-radius: 4px; background: #fff; color: #1558d6; gap: 13px; justify-content: center; }
.upgrade svg { width: 20px; height: 20px; }
.n-search { width: 300px; height: 48px; margin-left: 24px; padding-left: 14px; border: 1px solid #8590a2; border-radius: 8px; display: flex; align-items: center; gap: 12px; font: 400 20.500px/46px "Liberation Sans", Arial, sans-serif; color: #626f86; flex: none; }
.n-search svg { width: 19px; height: 19px; }
.n-icons { display: flex; align-items: center; margin-left: 19px; gap: 31px; }
.n-icons svg { width: 27px; height: 27px; }
.n-icons .help { width: 30px; height: 30px; margin-left: 1px; }
.me { width: 36px; height: 36px; margin-left: 1px; border-radius: 50%; background: #de350b; color: #fff; font: 600 14.500px/36px "Open Sans", sans-serif; text-align: center; }

/* Sidebar */
.body { display: flex; height: 700px; }
.side { width: 363px; border-right: 4px solid #ebecf0; flex: none; padding-top: 53px; }
.project { display: flex; align-items: center; padding-left: 36px; height: 36px; gap: 18px; }
.project svg { width: 36px; height: 36px; }
.project div { display: flex; flex-direction: column; padding-top: 1px; }
.project strong { font-size: 19.500px; font-weight: 600; line-height: 23px; letter-spacing: -.05px; }
.project small { font-size: 17px; line-height: 22px; color: #626f86; }
.scroller { display: flex; height: 545px; margin-top: 29px; }
.menu { width: 336px; padding: 16px 11px 0 12px; overflow: hidden; color: #44546f; }
.menu h3 { margin: 0 0 5px 28px; font-size: 17.200px; line-height: 30px; font-weight: 400; }
.menu a { display: flex; align-items: center; height: 60px; width: 310px; padding-left: 31px; gap: 21px; position: relative; }
.menu a svg { width: 30px; height: 30px; }
.menu .on { width: 307px; margin-left: 3px; padding-left: 28px; background: #e9f2ff; color: #0c66e4; border-radius: 4px; }
.menu .on::before { content: ""; position: absolute; left: 0; top: 18px; width: 6px; height: 24px; background: #0c66e4; border-radius: 0 4px 4px 0; }
.menu .add { margin-top: 12px; gap: 20px; }
.menu .dev { margin: 15px 0 0 28px; }
.menu .code { margin-top: 7px; }
.menu hr { border: 0; height: 1px; background: #dcdfe4; margin: 10px 0 0; }
.menu .pages { height: 59px; padding-top: 30px; border-bottom: 3px solid #dcdfe4; gap: 24px; color: #2c3e5d; width: 314px; }
.menu .pages svg { width: 24px; height: 30px; }
.bar { width: 23px; padding-left: 1px; background: #fcfcfc; display: flex; flex-direction: column; align-items: center; }
.up, .down { border: 7px solid transparent; width: 0; height: 0; }
.up { border-bottom: 11px solid #8b8b8b; border-top: 0; margin-top: 12px; }
.down { border-top: 11px solid #8b8b8b; border-bottom: 0; margin-top: 83px; }
.thumb { width: 13px; height: 406px; border-radius: 7px; background: #8b8b8b; margin-top: 12px; }

/* Board page */
.main { flex: 1; padding: 41px 59px 0 57px; }
.crumbs { display: flex; gap: 14px; font-size: 19.700px; line-height: 30px; color: #44546f; }
.head { display: flex; align-items: center; justify-content: space-between; height: 48px; margin-top: 1px; }
h1 { margin: 4px 0 0; font-size: 34px; line-height: 44px; font-weight: 600; letter-spacing: -.05px; white-space: nowrap; }
.actions { display: flex; align-items: center; }
.i26 { width: 26px; height: 26px; }
.i28 { width: 28px; height: 28px; }
.days { font-size: 17px; color: #626f86; width: 51px; margin-left: 11px; padding-top: 1px; white-space: nowrap; }
.vr { width: 1px; height: 36px; background: #dcdfe4; margin: 0 23px; }
.a-fav { color: #626f86; margin: 0 20px 0 21px; }
.actions .i28 + .i26 { margin-left: 21px; }
.done-btn { width: 189px; height: 48px; margin: 0 12px 0 23px; border-radius: 4px; background: #f1f2f4; justify-content: center; font-size: 20.300px; }
.sq { width: 48px; height: 48px; padding: 0; border-radius: 4px; background: #f1f2f4; justify-content: center; }
.sq svg { width: 28px; height: 28px; }
.sq .big { width: 30px; height: 30px; }
.filters { display: flex; align-items: center; height: 60px; margin-top: 36px; }
.f-search { width: 180px; height: 60px; border: 1px solid #8590a2; border-radius: 4px; display: flex; align-items: center; padding-left: 14px; gap: 11px; color: #626f86; flex: none; }
.f-search span { padding-top: 2px; }
.f-search svg { width: 20px; height: 20px; color: #44546f; }
.av-d { width: 48px; height: 48px; margin-left: 24px; border-radius: 50%; background: #de350b; box-shadow: 0 0 0 3px #fff; color: #fff; font-weight: 600; line-height: 48px; text-align: center; flex: none; z-index: 1; }
.av-u { width: 48px; height: 48px; margin-left: -3px; }
.av-add { width: 48px; height: 48px; margin-left: 15px; border-radius: 50%; background: #f1f2f4; display: flex; align-items: center; justify-content: center; flex: none; }
.av-add svg { width: 28px; height: 28px; margin-left: 3px; }
.type { width: 75px; margin-left: 36px; padding-top: 2px; display: flex; align-items: center; justify-content: space-between; }
.type svg, .none svg { width: 12px; height: 8px; color: #44546f; }
.group { margin-left: auto; margin-right: 11px; padding-top: 1px; font-size: 16.200px; letter-spacing: -.3px; color: #626f86; }
.none { width: 125px; height: 48px; padding-right: 4px; border-radius: 4px; background: #f1f2f4; gap: 20px; justify-content: center; font-size: 20.300px; }
.q1 { margin-left: 6px; }
.q2 { margin-left: 7px; }
.q3 { margin-left: 12px; }

.board { display: flex; align-items: flex-start; margin: 48px 0 0 -3px; gap: 18px; }
.col { width: 405px; height: 276px; flex: none; border-radius: 6px; background: #f7f8f9; padding: 22px 7px 0 8px; }
.col h2 { margin: 0; padding-left: 16px; display: flex; align-items: center; gap: 28px; height: 30px; font-size: 17.300px; font-weight: 400; color: #626f86; }
.card { height: 126px; margin-top: 29px; border-radius: 4px; background: #fff; box-shadow: 0 1px 1px #091e4240, 0 0 1px #091e424f, 0 2px 1px #091e4220; padding: 20px 21px 0 18px; }
.card p { margin: 0; }
.row { display: flex; align-items: center; height: 36px; margin-top: 19px; color: #44546f; font-size: 17.800px; }
.kind { width: 21px; height: 22px; margin: 3px 8px 0 1px; }
.key { flex: 1; }
.struck { text-decoration: line-through; }
.tick { width: 15px; height: 13px; color: #22a06b; }
.row .tick { margin-right: 19px; }
.who { width: 36px; height: 36px; }
.new { display: flex; align-items: center; padding-left: 15px; margin-top: 20px; gap: 9px; }
.new svg { width: 18px; height: 18px; margin-top: -3px; }
.addcol { margin-left: -6px; }
.quick { position: absolute; left: 1630px; top: 798px; width: 242px; height: 60px; border-radius: 30px; background: #6e5dc6; color: #fff; box-shadow: 0 10px 20px #091e4230, 0 0 1px #091e424f; display: flex; align-items: center; padding-left: 27px; font-size: 22.500px; font-weight: 600; letter-spacing: -.3px; }
.quick em { font-style: normal; padding-top: 3px; }
.quick > svg { width: 19px; height: 25px; margin-right: 13px; }
.quick span { width: 40px; height: 40px; border-radius: 50%; background: #8270db; box-shadow: 0 0 0 4px #6958bd; display: flex; align-items: center; justify-content: center; position: absolute; left: 188px; top: 10px; }
.quick span svg { width: 14px; height: 14px; }

/* Desktop taskbar */
.taskbar { margin-top: 6px; height: 70px; flex: none; border-top: 2px solid #b0b8c3; background: linear-gradient(90deg, #deebf4 0%, #dfeaf3 20%, #d5e0f2 28%, #d8dcef 38%, #d6e0f2 48%, #d8dbeb 60%, #d8dff0 72%, #d6d9ea 78%, #dce8f2 88%, #deedf5 100%); display: flex; align-items: center; color: #1b1b1b; }
.weather { width: 322px; height: 68px; position: relative; }
.weather i { width: 30px; height: 30px; border-radius: 50%; margin: 18px 0 0 33px; background: linear-gradient(135deg, #eab63a, #f4600c); }
.taskbar b { position: absolute; width: 24px; height: 24px; border-radius: 50%; background: #c42b1c; color: #fff; font-size: 17px; line-height: 23px; text-align: center; font-weight: 400; }
.weather b { left: 47px; top: 8px; }
.apps { display: flex; width: 995px; }
.apps span { width: 66.300px; height: 68px; flex: none; display: flex; align-items: center; justify-content: center; position: relative; }
.apps .nudge { left: 2px; }
.apps svg { width: 35px; height: 35px; }
.apps .run::after, .apps .active::after { content: ""; position: absolute; left: 30px; top: 58px; width: 9px; height: 5px; border-radius: 3px; background: #7b7f8a; }
.apps .active::before { content: ""; position: absolute; left: 6px; top: 6px; width: 56px; height: 56px; border-radius: 6px; background: #eaeff9; box-shadow: 0 1px 2px #a9b3c8; }
.apps .active svg { position: relative; }
.apps .active::after { left: 22px; width: 24px; background: #0a78d4; }
.teams b { left: 36px; top: 9px; }
.app-letter { font: 700 14.500px "Open Sans", sans-serif; fill: #fff; }
.tray { display: flex; align-items: center; margin-left: 165px; font-size: 17px; line-height: 23px; }
.y-up { width: 17px; height: 10px; }
.mic { width: 47px; height: 58px; margin-left: 16px; border-radius: 6px; background: #eff3f9; display: flex; align-items: center; justify-content: center; flex: none; }
.mic svg { width: 25px; height: 26px; }
.lang { width: 46px; margin-left: 11px; text-align: center; font-size: 17.300px; }
.y-wifi { width: 25px; height: 21px; margin-left: 21px; }
.y-vol { width: 25px; height: 21px; margin-left: 11px; }
.y-bat { width: 25px; height: 16px; margin-left: 11px; }
.clock { width: 110px; margin-left: 8px; text-align: right; white-space: nowrap; font-size: 17.900px; }
.y-bell { width: 20px; height: 24px; margin-left: 13px; }
```
